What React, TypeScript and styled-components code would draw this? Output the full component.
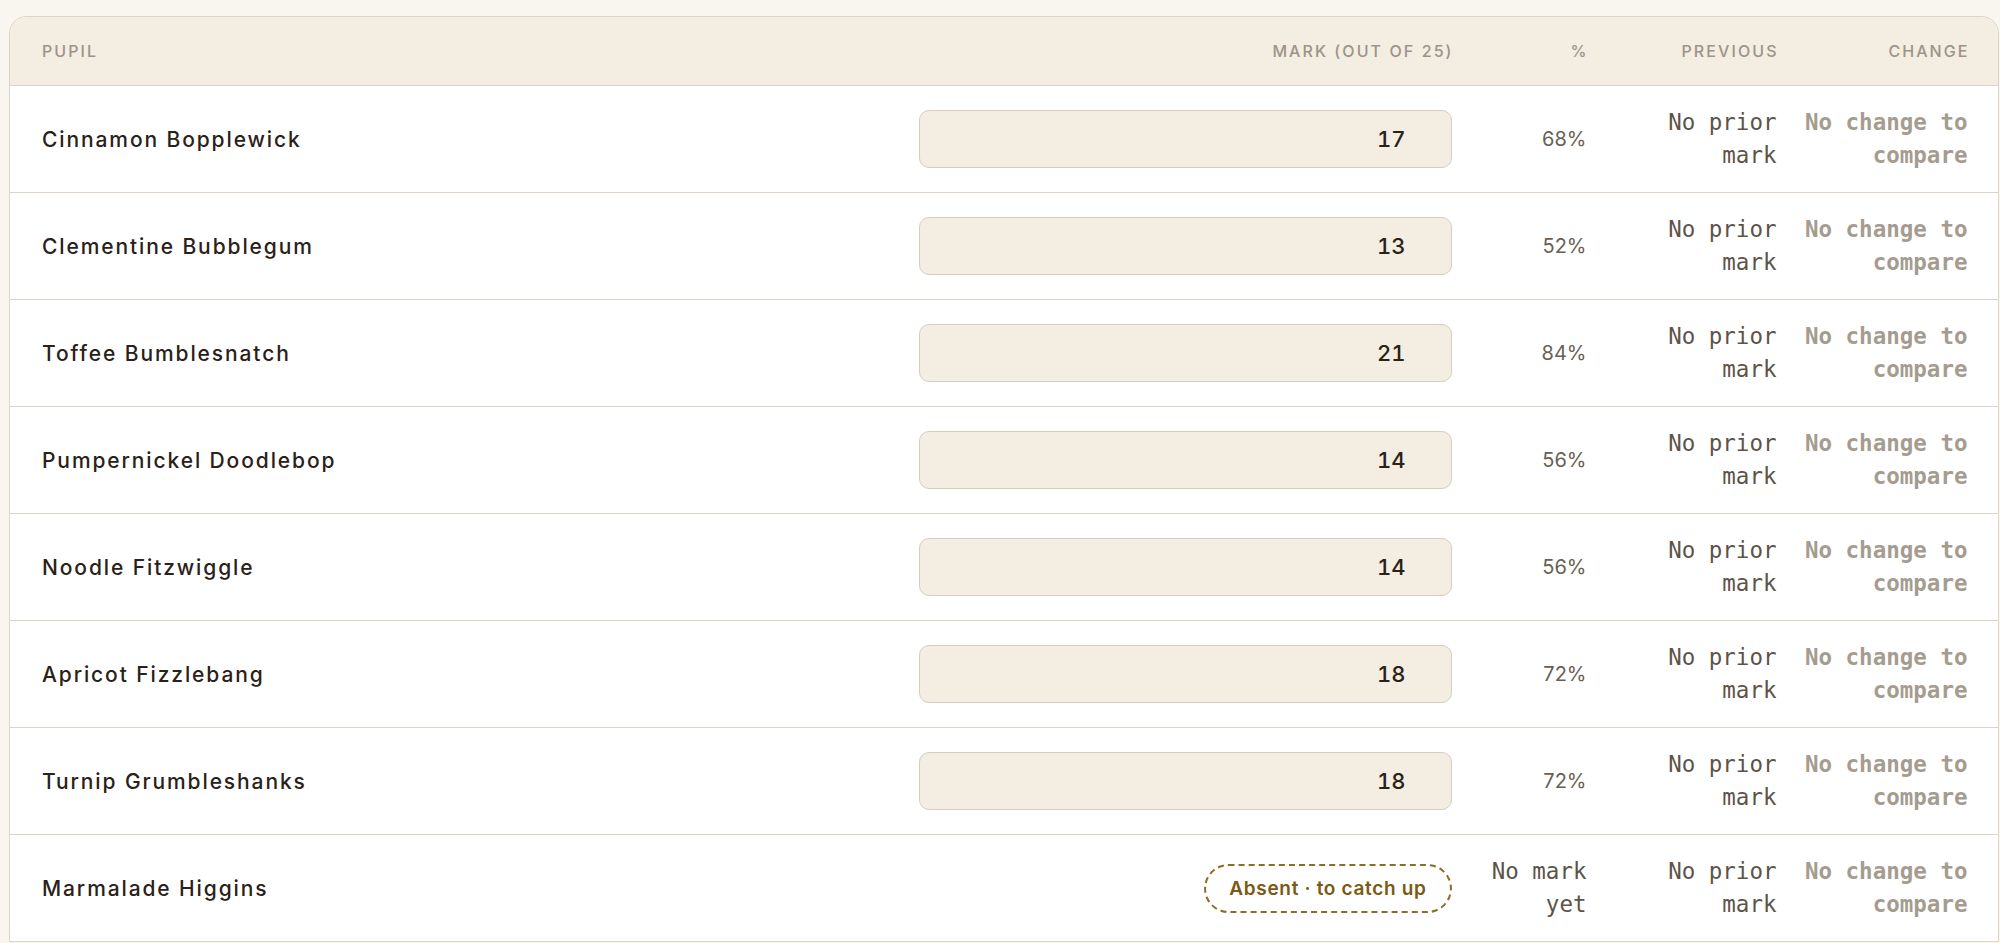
import React from "react";
import styled, { createGlobalStyle } from "styled-components";

const GlobalStyle = createGlobalStyle`
  html, body {
    margin: 0;
    padding: 0;
    background: #f9f6f0;
    font-family: "Inter", "Noto Sans", sans-serif;
    overflow: hidden;
  }
`;

const Page = styled.div`
  padding: 16px 1px 0 9px;
`;

const Card = styled.div`
  background: #ffffff;
  border: 1px solid #dcd4c8;
  border-bottom: none;
  border-radius: 18px 18px 0 0;
  overflow: hidden;
`;

const gridCols = `
  display: grid;
  grid-template-columns: 1fr 533px 119px 174px 175px;
  column-gap: 16px;
  align-items: center;
  padding: 0 30.5px 0 32px;
`;

const HeaderRow = styled.div`
  ${gridCols}
  height: 68px;
  background: #f3ede2;
  border-bottom: 1px solid #dcd4c8;
`;

const HeadCell = styled.div<{ $align?: "left" | "right" }>`
  font-family: "Inter", sans-serif;
  font-size: 16px;
  font-weight: 500;
  letter-spacing: 0.13em;
  text-transform: uppercase;
  color: #9d9388;
  text-align: ${(p) => p.$align ?? "right"};
  margin-right: ${(p) => (p.$align === "left" ? "0" : "-0.13em")};
`;

const Row = styled.div`
  ${gridCols}
  height: 106px;
  border-bottom: 1px solid #dcd4c8;
`;

const Name = styled.div`
  font-family: "Inter", sans-serif;
  font-size: 21px;
  font-weight: 500;
  letter-spacing: 0.09em;
  color: #2a2118;
`;

const MarkInput = styled.input`
  box-sizing: border-box;
  width: 100%;
  height: 58px;
  background: #f3ede2;
  border: 1px solid #d6cdbf;
  border-radius: 10px;
  text-align: right;
  padding: 0 45px 0 16px;
  font-family: "Inter", sans-serif;
  font-size: 22px;
  font-weight: 500;
  font-variant-numeric: tabular-nums;
  color: #2a2118;
  outline: none;
`;

const AbsentBadge = styled.div`
  justify-self: end;
  box-sizing: border-box;
  height: 49px;
  display: inline-flex;
  align-items: center;
  padding: 0 23px;
  border: 2px dashed #8d6d25;
  border-radius: 999px;
  font-family: "Inter", sans-serif;
  font-size: 19px;
  font-weight: 600;
  letter-spacing: 0.035em;
  color: #7a5a14;
  white-space: nowrap;
`;

const Percent = styled.div`
  text-align: right;
  font-family: "Inter", sans-serif;
  font-size: 20px;
  color: #6a5f55;
`;

const MonoNote = styled.div<{ $muted?: boolean }>`
  text-align: right;
  font-family: "DejaVu Sans Mono", "Liberation Mono", monospace;
  font-size: 22.5px;
  line-height: 33px;
  font-weight: ${(p) => (p.$muted ? 700 : 400)};
  color: ${(p) => (p.$muted ? "#a59c90" : "#5d5349")};
`;

type Pupil = { name: string; mark: number | null };

const pupils: Pupil[] = [
  { name: "Cinnamon Bopplewick", mark: 17 },
  { name: "Clementine Bubblegum", mark: 13 },
  { name: "Toffee Bumblesnatch", mark: 21 },
  { name: "Pumpernickel Doodlebop", mark: 14 },
  { name: "Noodle Fitzwiggle", mark: 14 },
  { name: "Apricot Fizzlebang", mark: 18 },
  { name: "Turnip Grumbleshanks", mark: 18 },
  { name: "Marmalade Higgins", mark: null },
];

const OUT_OF = 25;

export default function App() {
  return (
    <>
      <GlobalStyle />
      <Page>
        <Card>
          <HeaderRow>
            <HeadCell $align="left">Pupil</HeadCell>
            <HeadCell>Mark (out of 25)</HeadCell>
            <HeadCell>%</HeadCell>
            <HeadCell>Previous</HeadCell>
            <HeadCell>Change</HeadCell>
          </HeaderRow>
          {pupils.map((p) => (
            <Row key={p.name}>
              <Name>{p.name}</Name>
              {p.mark !== null ? (
                <MarkInput type="text" defaultValue={String(p.mark)} readOnly />
              ) : (
                <AbsentBadge>Absent · to catch up</AbsentBadge>
              )}
              {p.mark !== null ? (
                <Percent>{Math.round((p.mark / OUT_OF) * 100)}%</Percent>
              ) : (
                <MonoNote>No mark yet</MonoNote>
              )}
              <MonoNote>No prior mark</MonoNote>
              <MonoNote $muted>No change to compare</MonoNote>
            </Row>
          ))}
        </Card>
      </Page>
    </>
  );
}
